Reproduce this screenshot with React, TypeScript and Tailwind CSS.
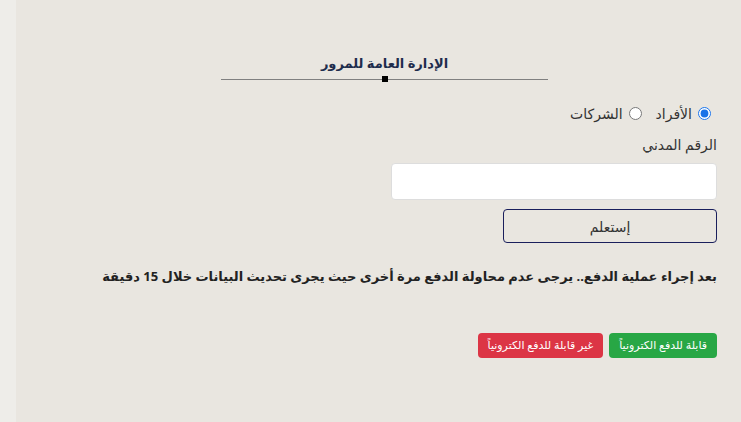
import { useState } from 'react';

const FONT = '"Noto Sans", "DejaVu Sans", sans-serif';

export default function App() {
  const [type, setType] = useState<'person' | 'company'>('person');

  return (
    <div
      dir="rtl"
      className="flex h-[422px] w-[741px] overflow-hidden bg-[#e9e6e0] text-[#333]"
      style={{ fontFamily: FONT }}
    >
      <div className="flex-1 pr-[24px] pl-[36px]">
        {/* Title */}
        <div className="flex flex-col items-center pt-[52px]">
          <h1 className="text-[13px] font-bold leading-[22px] text-[#1f2d4d]">الإدارة العامة للمرور</h1>
          <div className="relative mt-[5px] h-px w-[327px] bg-[#808080]">
            <span className="absolute left-1/2 top-[-3px] h-[6px] w-[6px] -translate-x-1/2 bg-black" />
          </div>
        </div>

        {/* Type radios */}
        <div className="mt-[23px] flex items-center gap-[14px] pr-[6px] text-[14px]">
          <label className="flex items-center gap-[6px]">
            <input
              type="radio"
              name="type"
              checked={type === 'person'}
              onChange={() => setType('person')}
              className="h-[13px] w-[13px] accent-[#1a73e8]"
            />
            <span>الأفراد</span>
          </label>
          <label className="flex items-center gap-[6px]">
            <input
              type="radio"
              name="type"
              checked={type === 'company'}
              onChange={() => setType('company')}
              className="h-[13px] w-[13px]"
            />
            <span>الشركات</span>
          </label>
        </div>

        <div className="mt-[11px] text-[14px] leading-[20px]">الرقم المدني</div>

        <input
          type="text"
          className="mt-[8px] block h-[37px] w-[326px] rounded-[4px] border border-[#ddd] bg-white px-2 outline-none"
        />

        <button className="mt-[9px] block h-[34px] w-[214px] rounded-[4px] border border-[#1a1f5c] text-[14px] text-[#333]">
          إستعلم
        </button>

        <p className="mt-[22px] text-[13px] font-bold leading-[22px] text-[#222]">
          بعد إجراء عملية الدفع.. يرجى عدم محاولة الدفع مرة أخرى حيث يجرى تحديث البيانات خلال 15 دقيقة
        </p>

        <div className="mt-[46px] flex gap-[6px]">
          <span className="flex h-[25px] items-center rounded-[4px] bg-[#28a745] px-[10px] text-[11px] text-white">
            قابلة للدفع الكترونياً
          </span>
          <span className="flex h-[25px] items-center rounded-[4px] bg-[#dc3545] px-[10px] text-[11px] text-white">
            غير قابلة للدفع الكترونياً
          </span>
        </div>
      </div>
      <div className="w-[16px] shrink-0 bg-[#eeede9]" />
    </div>
  );
}
